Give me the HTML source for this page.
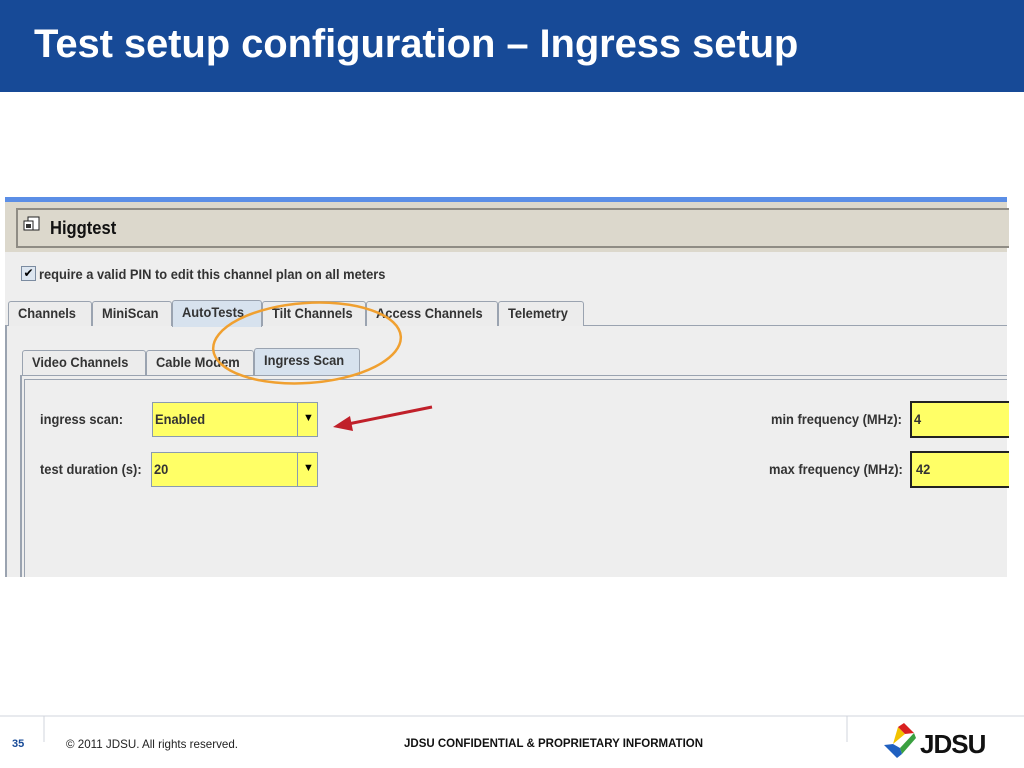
<!DOCTYPE html>
<html><head><style>
body{margin:0;width:1024px;height:768px;position:relative;background:#fff;font-family:"Liberation Sans",sans-serif;overflow:hidden}
.a{position:absolute}
.t{font-family:"Liberation Sans",sans-serif;font-weight:bold;font-size:14px;color:#333;white-space:nowrap;transform:scaleX(.92);transform-origin:left center}
.tab{position:absolute;height:24px;border:1px solid #9aa3b0;border-bottom:none;background:#ececec;border-radius:3px 3px 0 0}
.tab span{position:absolute;left:9px;top:3px}
.sel{background:#d7e2ee}
.fld{position:absolute;background:#ffff66;border:1px solid #8a9bb0}
</style></head><body>
<div class="a" style="left:0;top:0;width:1024px;height:92px;background:#174a97"></div>
<div class="a" style="left:34px;top:22px;font-size:40px;font-weight:bold;color:#fff;letter-spacing:-0.1px">Test setup configuration – Ingress setup</div>

<div class="a" style="left:5px;top:197px;width:1002px;height:380px;background:#eeeeee"></div>
<div class="a" style="left:5px;top:197px;width:1002px;height:5px;background:#5b8ee6"></div>
<div class="a" style="left:5px;top:202px;width:1002px;height:50px;background:#dcd8cc"></div>
<div class="a" style="left:16px;top:208px;width:991px;height:36px;border-top:2px solid #8f8c84;border-bottom:2px solid #8f8c84;border-left:2px solid #8f8c84;background:#dcd8cc"></div>
<svg class="a" style="left:23px;top:216px" width="18" height="18"><rect x="5" y="1" width="11" height="13" fill="#fff" stroke="#222"/><rect x="1" y="5" width="9" height="9" fill="#fff" stroke="#222"/><rect x="3" y="8" width="5" height="4" fill="#333"/></svg>
<div class="a t" style="left:50px;top:218px;font-size:18px;color:#111">Higgtest</div>

<div class="a" style="left:21px;top:266px;width:13px;height:13px;border:1px solid #7b8ba0;background:#dde6f0;font-size:12px;line-height:13px;text-align:center">✔</div>
<div class="a t" style="left:39px;top:266px">require a valid PIN to edit this channel plan on all meters</div>

<div class="a" style="left:5px;top:325px;width:1002px;height:1px;background:#9aa3b0"></div>
<div class="tab" style="left:8px;top:301px;width:82px"><span class="t">Channels</span></div>
<div class="tab" style="left:92px;top:301px;width:78px"><span class="t">MiniScan</span></div>
<div class="tab sel" style="left:172px;top:300px;width:88px;height:26px"><span class="t">AutoTests</span></div>
<div class="tab" style="left:262px;top:301px;width:102px"><span class="t">Tilt Channels</span></div>
<div class="tab" style="left:366px;top:301px;width:130px"><span class="t">Access Channels</span></div>
<div class="tab" style="left:498px;top:301px;width:84px"><span class="t">Telemetry</span></div>
<div class="a" style="left:5px;top:326px;width:2px;height:251px;background:#9aa3b0"></div>

<div class="tab" style="left:22px;top:350px;width:122px"><span class="t">Video Channels</span></div>
<div class="tab" style="left:146px;top:350px;width:106px"><span class="t">Cable Modem</span></div>
<div class="tab sel" style="left:254px;top:348px;width:104px;height:27px"><span class="t">Ingress Scan</span></div>
<div class="a" style="left:20px;top:375px;width:987px;height:1px;background:#9aa3b0"></div>
<div class="a" style="left:20px;top:375px;width:2px;height:202px;background:#9aa3b0"></div>
<div class="a" style="left:24px;top:379px;width:983px;height:1px;background:#9aa3b0"></div>
<div class="a" style="left:24px;top:379px;width:1px;height:198px;background:#9aa3b0"></div>

<div class="a t" style="left:40px;top:411px">ingress scan:</div>
<div class="fld" style="left:152px;top:402px;width:164px;height:33px"><span class="a t" style="left:2px;top:8px">Enabled</span><div class="a" style="left:144px;top:0;width:1px;height:33px;background:#8a9bb0"></div><span class="a" style="left:150px;top:9px;font-size:11px">▼</span></div>
<div class="a t" style="left:40px;top:461px">test duration (s):</div>
<div class="fld" style="left:151px;top:452px;width:165px;height:33px"><span class="a t" style="left:2px;top:8px">20</span><div class="a" style="left:145px;top:0;width:1px;height:33px;background:#8a9bb0"></div><span class="a" style="left:151px;top:9px;font-size:11px">▼</span></div>

<div class="a t" style="left:771px;top:411px">min frequency (MHz):</div>
<div class="fld" style="left:910px;top:401px;width:97px;height:33px;border:2px solid #222;border-right:none"><span class="a t" style="left:2px;top:8px">4</span></div>
<div class="a t" style="left:769px;top:461px">max frequency (MHz):</div>
<div class="fld" style="left:910px;top:451px;width:97px;height:33px;border:2px solid #222;border-right:none"><span class="a t" style="left:4px;top:8px">42</span></div>

<svg class="a" style="left:0;top:0" width="1024" height="768">
<ellipse cx="307" cy="343" rx="94" ry="40" transform="rotate(-4 307 343)" fill="none" stroke="#f0a030" stroke-width="2.5"/>
<line x1="432" y1="407" x2="348" y2="424" stroke="#c0202a" stroke-width="3"/>
<polygon points="333,427 350,416 353,431" fill="#c0202a"/>
<line x1="0" y1="716" x2="1024" y2="716" stroke="#d0d4dc"/>
<line x1="44" y1="716" x2="44" y2="742" stroke="#d0d4dc"/>
<line x1="847" y1="716" x2="847" y2="742" stroke="#d0d4dc"/>
<path d="M898 727 L905 734 L893 744 Z" fill="#f2c200"/><path d="M898 727 L904 723 L914 733 L905 734Z" fill="#d92020"/>
<path d="M914 733 L916 738 L902 754 L900 748Z" fill="#3aa040"/><path d="M893 744 L900 748 L902 754 L897 758 L884 745Z" fill="#2060c0"/>
</svg>
<div class="a" style="left:12px;top:738px;font-size:11px;font-weight:bold;color:#174a97">35</div>
<div class="a" style="left:66px;top:738px;font-size:11.6px;color:#222">© 2011 JDSU. All rights reserved.</div>
<div class="a" style="left:404px;top:738px;font-size:11.5px;font-weight:bold;color:#111">JDSU CONFIDENTIAL &amp; PROPRIETARY INFORMATION</div>
<div class="a" style="left:920px;top:729px;font-size:26px;font-weight:bold;color:#111;letter-spacing:-1px">JDSU</div>
</body></html>
